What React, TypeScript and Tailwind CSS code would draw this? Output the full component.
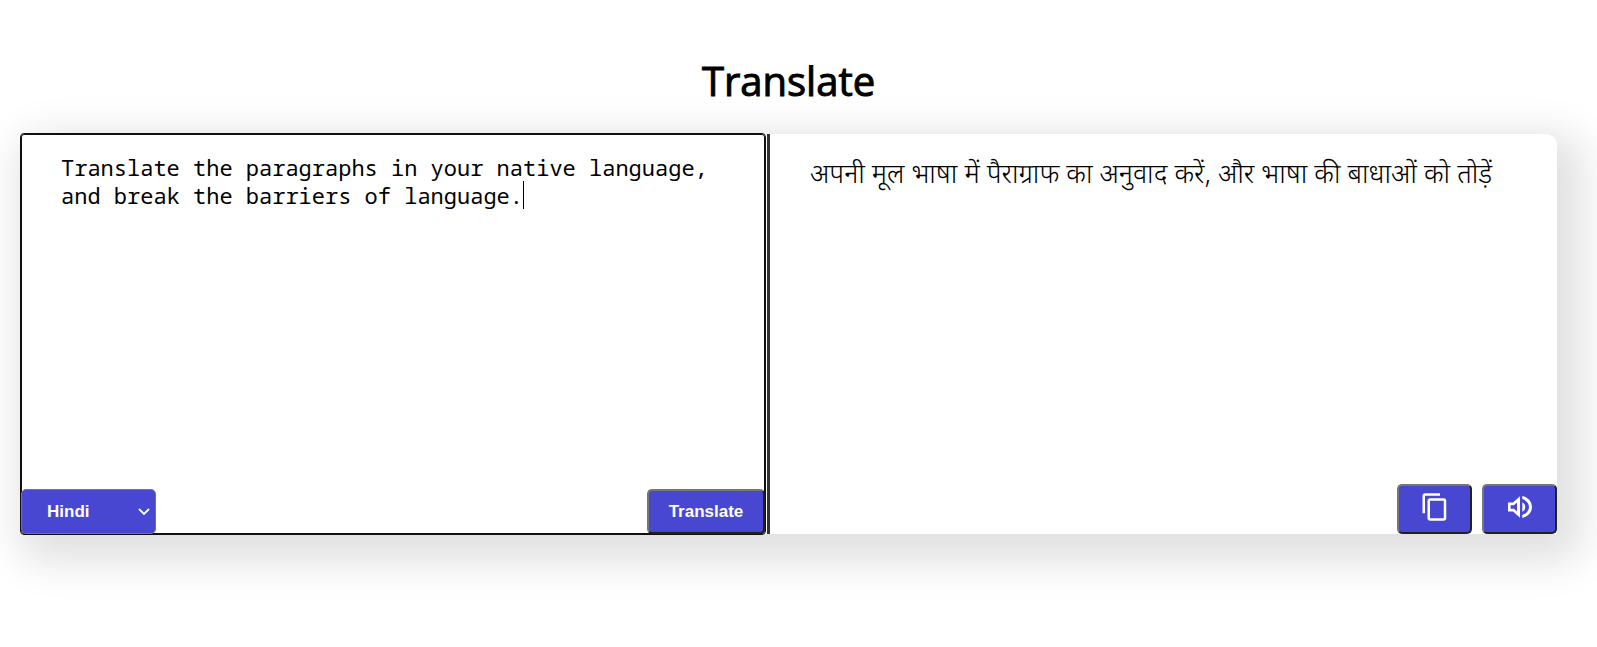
import { useState } from "react";

const controlClass =
  "rounded-[5px] bg-[#4747d1] text-[17px] font-bold text-white cursor-pointer";
const bevelClass =
  "border-2 border-t-[#767676] border-r-[#212121] border-b-[#212121] border-l-[#767676]";
const editorClass =
  "px-[39px] pt-[18px] pb-5 font-['Noto_Sans_Mono','DejaVu_Sans_Mono',monospace] text-[22px] leading-7";

function CopyIcon() {
  return (
    <svg viewBox="0 0 24 24" className="size-[30px]" fill="currentColor" aria-hidden="true">
      <path d="M16 1H4c-1.1 0-2 .9-2 2v14h2V3h12V1zm3 4H8c-1.1 0-2 .9-2 2v14c0 1.1.9 2 2 2h11c1.1 0 2-.9 2-2V7c0-1.1-.9-2-2-2zm0 16H8V7h11v14z" />
    </svg>
  );
}

function VolumeIcon() {
  return (
    <svg viewBox="0 0 24 22" className="h-[22px] w-6" fill="currentColor" aria-hidden="true">
      <path fillRule="evenodd" d="M0 6.5H5L12 .3V21.7L5 15.5H0ZM2.6 9.2V12.8H6L9 15.6V6.4L6 9.2Z" />
      <path d="M14.3 6.2C18.2 8.2 18.2 13.8 14.3 15.8Z" />
      <path d="M14.3 0C27.2 3 27.2 19 14.3 22V19C23.2 16.4 23.2 5.6 14.3 3Z" />
    </svg>
  );
}

export default function App() {
  const [text, setText] = useState(
    "Translate the paragraphs in your native language, and break the barriers of language.",
  );
  const [language, setLanguage] = useState("Hindi");

  return (
    <main className="min-h-screen bg-white pt-[52px] pr-10 pb-16 pl-5 font-['Liberation_Sans',Arial,sans-serif] text-black">
      <h1 className="text-center font-['Open_Sans','Noto_Sans',sans-serif] text-[40px] leading-[58px] font-medium [-webkit-text-stroke:1px_black]">
        Translate
      </h1>
      <div className="mt-6 grid min-h-[400px] grid-cols-[750fr_787fr] rounded-xl shadow-[12px_14px_40px_14px_rgba(0,0,0,0.12)]">
        <section className="relative grid border-r-3 border-[#333] bg-white pr-0.5 pl-px">
          <textarea
            aria-label="Text to translate"
            value={text}
            onChange={(event) => setText(event.target.value)}
            className={`${editorClass} resize-none rounded-[3px] border border-[#101010] bg-white caret-transparent outline-1 outline-[#101010]`}
          />
          <div
            aria-hidden="true"
            className={`${editorClass} pointer-events-none absolute inset-0 mr-0.5 ml-px border border-transparent whitespace-pre-wrap`}
          >
            <span className="invisible">{text}</span>
            <span className="absolute h-7 w-px bg-black" />
          </div>
          <div className="absolute right-0.5 bottom-0 left-px flex items-end justify-between">
            <div className="relative">
              <select
                aria-label="Language"
                value={language}
                onChange={(event) => setLanguage(event.target.value)}
                className={`${controlClass} block h-[45px] w-[135px] appearance-none border border-[#767676] px-[25px]`}
              >
                <option>Hindi</option>
                <option>English</option>
                <option>Spanish</option>
              </select>
              <svg viewBox="0 0 12 8" className="pointer-events-none absolute top-[19px] right-[6px] h-2 w-3" fill="none" aria-hidden="true">
                <path d="M1 1l5 5 5-5" stroke="white" strokeWidth="1.8" />
              </svg>
            </div>
            <button type="button" className={`${controlClass} ${bevelClass} h-[45px] w-[118px]`}>
              Translate
            </button>
          </div>
        </section>
        <section className="flex flex-col justify-between rounded-tr-xl bg-white">
          <p lang="hi" className="px-10 pt-[23px] font-['Noto_Sans_Devanagari','Noto_Sans',sans-serif] text-[27px] leading-10 font-light">
            अपनी मूल भाषा में पैराग्राफ का अनुवाद करें, और भाषा की बाधाओं को तोड़ें
          </p>
          <div className="flex justify-end gap-[10px]">
            <button type="button" aria-label="Copy translation" className={`${controlClass} ${bevelClass} flex h-[50px] w-[75px] items-center justify-center pb-1`}>
              <CopyIcon />
            </button>
            <button type="button" aria-label="Listen to translation" className={`${controlClass} ${bevelClass} flex h-[50px] w-[75px] items-center justify-center pb-1`}>
              <VolumeIcon />
            </button>
          </div>
        </section>
      </div>
    </main>
  );
}
